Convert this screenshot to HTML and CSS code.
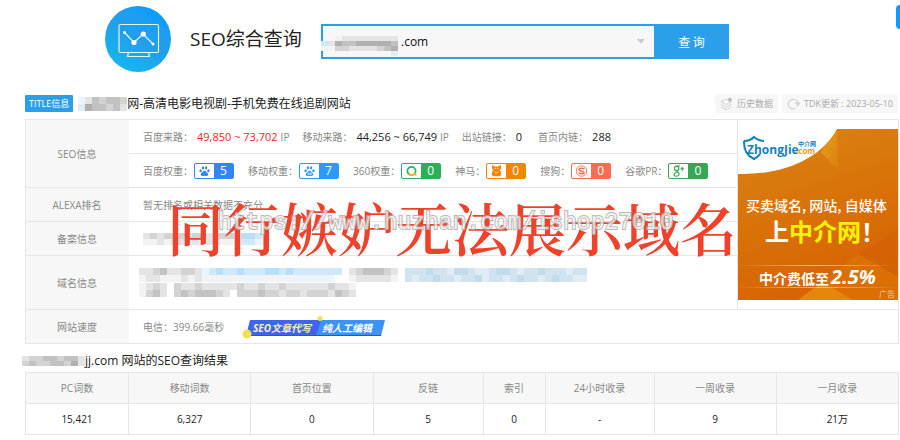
FILE: index.html
```html
<!DOCTYPE html>
<html lang="zh-CN">
<head>
<meta charset="utf-8">
<title>SEO综合查询</title>
<link rel="stylesheet" href="styles.css">
</head>
<body>
<span class="side-tab"></span>
<header class="header">
  <svg class="logo" viewBox="0 0 66 66" aria-hidden="true">
    <defs><linearGradient id="lg" x1="0.2" y1="1" x2="0.8" y2="0"><stop offset="0" stop-color="#15b9f2"/><stop offset=".5" stop-color="#219fea"/><stop offset=".75" stop-color="#1c9ef3"/><stop offset="1" stop-color="#009cff"/></linearGradient></defs>
    <circle cx="33" cy="33" r="33" fill="url(#lg)"/>
    <g fill="none" stroke="#e8f6ff" stroke-width="1.2">
      <rect x="14" y="18.5" width="39.500" height="28" rx="1.500"/>
      <path d="M23.500 46.500l-1 4h22l-1-4M19.500 26.500l9.500 10 9-8.500 10 10"/>
    </g>
    <g fill="#fff"><circle cx="19.500" cy="26.500" r="1.500"/><circle cx="29" cy="36.500" r="2.600"/><circle cx="38.300" cy="28" r="2.600"/><circle cx="48" cy="38" r="1.500"/></g>
  </svg>
  <h1 class="brand"><label for="domain">SEO综合查询</label></h1>
  <form class="search">
    <div class="field">
      <input id="domain" type="text" value=".com">
      <svg class="mosaic over-input" data-cells="..abbbbbbbb/gbeddeeeeed/faccbbbbcde/..........k" data-h="5"></svg>
      <span class="caret"></span>
    </div>
    <button class="go" type="button">查 询</button>
  </form>
</header>

<main>
  <section class="titlebar">
    <span class="tag">TITLE信息</span>
    <svg class="mosaic" data-cells="fbdcddc/keddcdb" data-h="7"></svg>
    <h2 class="site-title">网-高清电影电视剧-手机免费在线追剧网站</h2>
    <a class="chip" href="#">
      <svg viewBox="0 0 16 16" width="14" height="14" fill="none" stroke="#ccc"><path d="M8 2.500L2 5.500l6 3 6-3zM2 8.500l6 3 6-3M2 11.500l6 3 6-3"/><circle cx="12.500" cy="3" r="2.200" fill="#bbb" stroke="none"/></svg>
      历史数据</a>
    <a class="chip" href="#">
      <svg viewBox="0 0 16 16" width="14" height="14" fill="none" stroke="#ccc" stroke-width="1.200"><path d="M11.500 12.500A5.500 5.500 0 1 1 13.500 7M11.500 7h4l-2 3z"/></svg>
      TDK更新 : 2023-05-10</a>
  </section>

  <div class="info-wrap">
    <table class="info">
      <colgroup><col class="c-label"><col><col class="c-ad"></colgroup>
      <tr><th rowspan="2" scope="row">SEO信息</th>
        <td><div class="metrics sources">
          <span>百度来路：<b class="hot">49,850 ~ 73,702</b> IP</span>
          <span>移动来路：<b>44,256 ~ 66,749</b> IP</span>
          <span>出站链接：<b>0</b></span>
          <span>首页内链：<b>288</b></span>
        </div></td>
        <td class="ad" rowspan="5"><a href="#"><svg viewBox="0 0 160 171" class="banner">
          <defs>
            <linearGradient id="ad" x1="0" y1="0" x2=".3" y2="1"><stop offset="0" stop-color="#db8416"/><stop offset=".5" stop-color="#d87409"/><stop offset="1" stop-color="#d86403"/></linearGradient>
            <linearGradient id="gold" x1="0" y1="0" x2="1" y2="1"><stop offset="0" stop-color="#e9a51c"/><stop offset="1" stop-color="#d87a0c"/></linearGradient>
            <linearGradient id="ln"><stop offset="0" stop-color="#fff" stop-opacity="0"/><stop offset=".5" stop-color="#ffe9cc"/><stop offset="1" stop-color="#fff" stop-opacity="0"/></linearGradient>
          </defs>
          <rect width="160" height="171" fill="url(#ad)"/>
          <path d="M83 23L99 0l2 43z" fill="url(#gold)"/>
          <path d="M60 171l60-46 40 22v24z" fill="#e38508" opacity=".35"/>
          <path d="M120 125l40-25v48z" fill="#c95c04" opacity=".3"/>
          <path d="M60 171l24-18 31 18z" fill="#f0a016" opacity=".5"/>
          <path d="M0 0h99C82 31 44 46 0 45z" fill="#fff"/>
          <path d="M6 12q6 0 10-4 5 4 10 4M6 12c0 10 3 15 10 18q4-2 6-5" fill="none" stroke="#1682bd" stroke-width="2.200"/>
          <text class="zj" x="9" y="25" fill="#1581bd">ZhongJie</text>
          <text class="zj-com" x="58" y="25" fill="#f49a12">.com</text>
          <text class="zj-cn" x="60" y="17" fill="#1581bd">中介网</text>
          <text class="l1" x="8" y="82">买卖域名, 网站, 自媒体</text>
          <text class="l2" x="27" y="112">上<tspan fill="#fff200">中介网</tspan>！</text>
          <rect y="136" width="160" height="1" fill="url(#ln)" opacity=".6"/><rect y="158" width="160" height="1" fill="url(#ln)" opacity=".6"/>
          <text class="l3" x="21" y="155">中介费低至</text><text class="l4" x="93" y="155">2.5%</text>
          <text class="mark" x="141" y="168">广告</text>
        </svg></a></td></tr>
      <tr><td><div class="metrics ranks">
        <span>百度权重：<i class="rank baidu"><svg viewBox="0 0 16 16"><path d="M8 7.500c2 0 2.500 2 4 3.200 2 2 .5 4-1.500 4-1 0-1.500-.4-2.500-.4s-1.500.4-2.500.4c-2 0-3.500-2-1.500-4C5.500 9.500 6 7.500 8 7.500z"/><ellipse cx="2.800" cy="7.500" rx="1.600" ry="2"/><ellipse cx="5.900" cy="3.700" rx="1.600" ry="2.200"/><ellipse cx="10.100" cy="3.700" rx="1.600" ry="2.200"/><ellipse cx="13.200" cy="7.500" rx="1.600" ry="2"/></svg><b>5</b></i></span>
        <span>移动权重：<i class="rank mobile"><svg viewBox="0 0 16 16"><path d="M8 7.500c2 0 2.500 2 4 3.200 2 2 .5 4-1.500 4h-5c-2 0-3.500-2-1.500-4C5.500 9.500 6 7.500 8 7.500z"/><ellipse cx="2.800" cy="7.500" rx="1.600" ry="2"/><ellipse cx="5.900" cy="3.700" rx="1.600" ry="2.200"/><ellipse cx="10.100" cy="3.700" rx="1.600" ry="2.200"/><ellipse cx="13.200" cy="7.500" rx="1.600" ry="2"/><path d="M6 10v3h1.500v-3M9 10v3h1.500v-3" fill="none" stroke="#fff" stroke-width=".8"/></svg><b>7</b></i></span>
        <span>360权重：<i class="rank so"><svg viewBox="0 0 16 16"><circle cx="8" cy="8" r="5.500" fill="none" stroke="#2bb35a" stroke-width="2.400"/><path d="M4.200 12A5.500 5.500 0 0 0 12 11.500l2.500 2.500" fill="none" stroke="#f5b323" stroke-width="2.400"/></svg><b>0</b></i></span>
        <span>神马：<i class="rank shenma"><svg viewBox="0 0 16 16"><path d="M2 0l4 2h4l4-2v5l-2 2c3 2 2.500 6 1 8H3c-2-2-2-6 1-8L2 5z"/><path d="M5 4.500h2M9 4.500h2M6 9l2 2 2-2" stroke="#fff" fill="none"/></svg><b>0</b></i></span>
        <span>搜狗：<i class="rank sogou"><svg viewBox="0 0 16 16"><circle cx="8" cy="8" r="7" fill="none" stroke="#ff6b52" stroke-width="1.200"/><path d="M12 5.200C9 3.700 4.500 4 4.500 6.200S11.500 8 11.500 10s-4.500 2.200-7.500.6" fill="none" stroke="#ff6b52" stroke-width="2"/></svg><b>0</b></i></span>
        <span>谷歌PR：<i class="rank google"><svg viewBox="0 0 16 16"><g fill="none" stroke="#34a853" stroke-width="1.600"><ellipse cx="5.500" cy="4.500" rx="2.800" ry="3"/><path d="M5.500 1.300H10M6.500 7.500c-2 1 1 2 2 3.500 1 2-1 4-3.500 4S1 13 2.500 11.500s3-1.500 4-1.500M13 2.500v5M10.500 5h5"/></g></svg><b>0</b></i></span>
      </div></td></tr>
      <tr><th scope="row">ALEXA排名</th><td>暂无排名或相关数据不充分</td></tr>
      <tr><th scope="row">备案信息</th><td><svg class="mosaic" data-cells="bcbcccbccbcccfhhgf/aababbababbaafggff" data-h="6"></svg></td></tr>
      <tr class="tall"><th scope="row">域名信息</th><td><div class="mosaics">
        <svg class="mosaic" data-cells="bbcdbbccbfghgghggghhghggggggg.bcdddcb.iiijiikjjikkijjikiijiiikii/abbaaababaaafaaffaaafaffffff..abbbbba.ikiijiikiijkiikijiikijiikk" data-h="7"></svg>
        <svg class="mosaic" data-cells="abcb.cbbcbbbbbcbbcbbcbbbbbbcbba/acdb.cdcdddcb.cccdccbccbcccbdcb" data-h="7"></svg>
      </div></td></tr>
      <tr class="last"><th scope="row">网站速度</th><td colspan="2"><div class="speed">电信：399.66毫秒
        <a class="promo" href="#"><svg viewBox="0 0 144 24"><path d="M8 5h76l-8 16H4z" fill="#3f64f1"/><path d="M79 5h64l-4 16H74z" fill="#3b92f8"/><path d="M4 20.500h135" stroke="#2b54c9" stroke-width="1"/><circle cx="5" cy="19" r="4.500" fill="#f3df55"/><circle cx="78" cy="3.500" r="2.500" fill="#f3df55"/><text x="11" y="17" fill="#fff0ae">SEO文章代写</text><text x="80" y="17" fill="#fff">纯人工编辑</text></svg></a></div></td></tr>
    </table>
    <p class="stamp">同行嫉妒无法展示域名</p>
    <p class="watermark">https://www.huzhan.com/ishop27010</p>
  </div>

  <h2 class="result-title"><svg class="mosaic" data-cells="bccddcddb/cdccddceb" data-h="5"></svg>jj.com 网站的SEO查询结果</h2>
  <table class="results">
    <colgroup><col class="w-pc"><col><col><col class="w-link"><col class="w-index"><col class="w-day"><col><col></colgroup>
    <thead><tr><th>PC词数</th><th>移动词数</th><th>首页位置</th><th>反链</th><th>索引</th><th>24小时收录</th><th>一周收录</th><th>一月收录</th></tr></thead>
    <tbody><tr><td>15,421</td><td>6,327</td><td>0</td><td>5</td><td>0</td><td>-</td><td>9</td><td>21万</td></tr></tbody>
  </table>
</main>
<script src="mosaic.js"></script>
</body>
</html>
```
FILE: styles.css
```css
* { box-sizing: border-box; }
body {
  margin: 0;
  padding: 6px 1px 0 25px;
  background: #fff;
  color: #888;
  font: 10px/16px "Open Sans", "Noto Sans CJK SC", sans-serif;
}
h1, h2, p { margin: 0; font-weight: 400; }
a { color: inherit; text-decoration: none; }
svg { display: block; flex: none; }

.side-tab {
  position: absolute;
  top: 5px;
  right: 0;
  width: 4px;
  height: 24px;
  border-radius: 4px 0 0 4px;
  background: #0c9bff;
}

.header {
  display: flex;
  align-items: center;
  height: 66px;
  padding-left: 80px;
}
.logo { width: 66px; height: 66px; }
.brand {
  margin-left: 19px;
  width: 131px;
  color: #222;
  font-size: 19px;
  line-height: 28px;
  white-space: nowrap;
}
.search { display: flex; width: 408px; height: 35px; margin-top: 4px; }
.field { position: relative; flex: 1; }
.field input {
  width: 100%;
  height: 100%;
  padding: 0 24px 0 78px;
  border: 2px solid #2b9fea;
  border-right: 0;
  border-radius: 0;
  background: #f7f7f7;
  color: #111;
  font: 12px "Open Sans", sans-serif;
  outline: none;
}
.over-input { position: absolute; left: 0; top: 12px; }
.caret {
  position: absolute;
  right: 9px;
  top: 15px;
  border: 4px solid transparent;
  border-top: 5px solid #ccc;
  border-bottom: 0;
}
.go {
  width: 75px;
  border: 0;
  background: #2b9fea;
  color: #fff;
  font: 12px "Noto Sans CJK SC", sans-serif;
}

.titlebar { display: flex; align-items: center; margin-top: 22px; padding-right: 1px; height: 19px; }
.tag {
  padding: 0 4px;
  height: 17px;
  border-radius: 1px;
  background: #2b9fea;
  color: #fff;
  font-size: 9px;
  line-height: 17px;
}
.titlebar > .mosaic { margin-left: 5px; }
.site-title { flex: 1; color: #222; font-size: 12px; white-space: nowrap; }
.chip {
  display: flex;
  align-items: center;
  gap: 4px;
  height: 19px;
  margin-left: 4px;
  padding: 0 5px 0 4px;
  border-radius: 2px;
  background: #f7f7f7;
  color: #aaa;
  font-size: 9px;
}

.info-wrap { position: relative; margin-top: 6px; }
table { width: 100%; border-collapse: collapse; table-layout: fixed; }
th, td { padding: 0; border: 1px solid #e6e6e6; font-weight: 400; }
th { background: #f7f7f7; text-align: center; }
.info tr { height: 34px; }
.info .tall { height: 54px; }
.info th { border-right-color: #f7f7f7; }
.info td { padding-left: 14px; }
.info .ad { padding: 0; }
.c-label { width: 103px; }
.c-ad { width: 161px; }
.banner { width: 100%; font-family: "Noto Sans CJK SC", sans-serif; font-weight: 700; fill: #fff; }
.zj { font: 700 12px "Open Sans", sans-serif; }
.zj-com { font: 700 8px "Open Sans", sans-serif; }
.zj-cn { font-size: 6px; }
.l1 { font-size: 14px; font-weight: 500; }
.l2 { font-size: 24px; }
.l3 { font-size: 14px; }
.l4 { font: italic 700 20px "Open Sans", sans-serif; }
.mark { font-size: 8px; font-weight: 400; fill: #efc79f; }

.metrics { display: flex; align-items: center; white-space: nowrap; }
.metrics > span { display: flex; align-items: center; }
.metrics b { font-weight: 400; }
.sources { gap: 13px; }
.sources b { margin: 0 3px 0 4px; color: #222; font-size: 11px; }
.sources .hot { color: #f22; }
.ranks { gap: 14px; }
.rank {
  display: flex;
  width: 40px;
  height: 16px;
  margin-left: 1px;
  border: 1px solid;
  border-radius: 2px;
  color: var(--tone);
  font-style: normal;
}
.rank svg { width: 13px; height: 12px; margin: 1px 3px; fill: currentColor; }
.rank b {
  flex: 1;
  background: var(--tone);
  color: #fff;
  text-align: center;
  font-size: 12px;
  line-height: 14px;
}
.baidu { --tone: #3385ff; }
.mobile { --tone: #2b99ff; }
.so { --tone: #2bb056; }
.shenma { --tone: #f58400; }
.sogou { --tone: #ff6b52; }
.google { --tone: #34a853; }

.mosaics { display: grid; gap: 1px; margin-left: -4px; }
.speed { display: flex; align-items: center; gap: 18px; }
.promo svg { width: 144px; height: 24px; font: italic 700 10px "Open Sans", "Noto Sans CJK SC", sans-serif; }

.stamp, .watermark { position: absolute; white-space: nowrap; pointer-events: none; }
.stamp {
  left: 142px;
  top: 75px;
  color: #f0412a;
  font: 600 57px/64px "Noto Serif CJK SC", "Noto Serif SC", "Source Han Serif SC", "SimSun", "Noto Sans CJK SC", serif;
}
.watermark {
  left: 193px;
  top: 88px;
  color: #eee;
  opacity: .8;
  -webkit-text-stroke: 2px #aaa;
  paint-order: stroke fill;
  font: 23px/32px "Liberation Mono", monospace;
}

.result-title {
  display: flex;
  align-items: center;
  height: 28px;
  margin-left: -3px;
  padding-top: 6px;
  color: #222;
  font-size: 12px;
  white-space: pre;
}
.results tr { height: 31px; text-align: center; }
.results td { color: #222; }
.w-pc { width: 103px; }
.w-link { width: 110px; }
.w-index { width: 62px; }
.w-day { width: 109px; }
```
FILE: mosaic.js
```js
// Draws the pixelated blocks that hide private values.
const palette = {
  a: '#f3f3f3', b: '#e4e4e4', c: '#d3d3d3', d: '#c2c2c2', e: '#b0b0b0',
  f: '#eaf5fd', g: '#d0e9fa', h: '#b9def7', i: '#d0e3ef', j: '#c0dbea', k: '#e0edf5'
};
document.querySelectorAll('.mosaic').forEach(svg => {
  const rows = svg.dataset.cells.split('/');
  const h = Number(svg.dataset.h);
  const w = 7;
  svg.setAttribute('width', rows[0].length * w);
  svg.setAttribute('height', rows.length * h);
  rows.forEach((row, y) => [...row].forEach((key, x) => {
    if (!palette[key]) return;
    const r = document.createElementNS('http://www.w3.org/2000/svg', 'rect');
    r.setAttribute('x', x * w);
    r.setAttribute('y', y * h);
    r.setAttribute('width', w);
    r.setAttribute('height', h);
    r.setAttribute('fill', palette[key]);
    svg.append(r);
  }));
});
```
